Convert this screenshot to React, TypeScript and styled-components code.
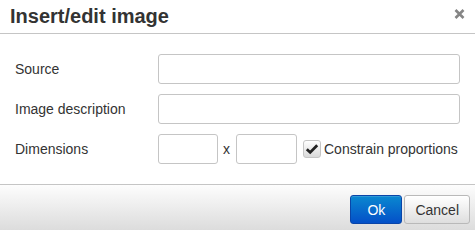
import React from "react";
import styled, { createGlobalStyle } from "styled-components";

const Global = createGlobalStyle`
  html, body { margin: 0; padding: 0; background: #fff; }
  body { font-family: "Liberation Sans", Arial, sans-serif; color: #333; }
  * { box-sizing: border-box; }
`;

const Dialog = styled.div`
  width: 475px;
  height: 230px;
  display: flex;
  flex-direction: column;
  background: #fff;
  overflow: hidden;
`;

const Head = styled.div`
  position: relative;
  height: 34px;
  padding: 0 10px;
  border-bottom: 1px solid #c5c5c5;
  flex-shrink: 0;
`;

const Title = styled.div`
  font-size: 20px;
  font-weight: bold;
  line-height: 32px;
  color: #333;
`;

const Close = styled.button`
  position: absolute;
  right: 10px;
  top: 8px;
  width: 12px;
  height: 12px;
  padding: 0;
  border: 0;
  background: none;
  display: flex;
  align-items: center;
  justify-content: center;
`;

const Body = styled.div`
  padding: 20px 15px 20px 15px;
  display: grid;
  grid-template-columns: 143px 1fr;
  row-gap: 10px;
  align-items: center;
  flex-shrink: 0;
`;

const Label = styled.label`
  font-size: 14px;
  color: #333;
  line-height: 30px;
`;

const TextBox = styled.input<{ $w?: number }>`
  height: 30px;
  width: ${(p) => (p.$w ? `${p.$w}px` : "100%")};
  border: 1px solid #c5c5c5;
  border-radius: 3px;
  background: #fff;
  padding: 0 4px;
  font: 14px "Liberation Sans", Arial, sans-serif;
  outline: none;
`;

const DimRow = styled.div`
  display: flex;
  align-items: center;
  height: 30px;
`;

const Times = styled.span`
  font-size: 14px;
  color: #333;
  margin: 0 6px 0 5px;
`;

const CheckWrap = styled.label`
  display: flex;
  align-items: center;
  margin-left: 6px;
  font-size: 14px;
  color: #333;
`;

const CheckBox = styled.span`
  width: 18px;
  height: 18px;
  border: 1px solid #c5c5c5;
  border-radius: 3px;
  background: linear-gradient(to bottom, #fff, #d9d9d9);
  display: flex;
  align-items: center;
  justify-content: center;
  margin-right: 3px;
`;

const Foot = styled.div`
  flex: 1;
  border-top: 1px solid #c5c5c5;
  background: linear-gradient(to bottom, #fdfdfd, #dcdcdc);
  display: flex;
  justify-content: flex-end;
  align-items: flex-start;
  padding: 10px 5px 0 0;
  gap: 2px;
`;

const Button = styled.button<{ $primary?: boolean }>`
  height: 29px;
  min-width: ${(p) => (p.$primary ? "52px" : "0")};
  padding: 0 10px;
  border-radius: 3px;
  font: 14px "Liberation Sans", Arial, sans-serif;
  color: ${(p) => (p.$primary ? "#fff" : "#333")};
  border: 1px solid ${(p) => (p.$primary ? "#0a45a8" : "#b9b9b9")};
  background: ${(p) =>
    p.$primary
      ? "linear-gradient(to bottom, #0a88d0, #0450c8)"
      : "linear-gradient(to bottom, #fff, #dedede)"};
  box-shadow: inset 0 1px 0 rgba(255, 255, 255, ${(p) => (p.$primary ? 0.15 : 0.6)});
`;

export default function App() {
  return (
    <Dialog>
      <Global />
      <Head>
        <Title>Insert/edit image</Title>
        <Close aria-label="Close">
          <svg width="11" height="10" viewBox="0 0 11 10">
            <path d="M1.5 1 L9.5 9 M9.5 1 L1.5 9" stroke="#858585" strokeWidth="2.6" strokeLinecap="butt" />
          </svg>
        </Close>
      </Head>
      <Body>
        <Label>Source</Label>
        <TextBox />
        <Label>Image description</Label>
        <TextBox />
        <Label>Dimensions</Label>
        <DimRow>
          <TextBox $w={60} />
          <Times>x</Times>
          <TextBox $w={61} />
          <CheckWrap>
            <CheckBox>
              <svg width="14" height="12" viewBox="0 0 14 12">
                <path d="M1.8 6.2 L5.2 9.4 L12.2 2.2" fill="none" stroke="#222" strokeWidth="2.8" />
              </svg>
            </CheckBox>
            Constrain proportions
          </CheckWrap>
        </DimRow>
      </Body>
      <Foot>
        <Button $primary>Ok</Button>
        <Button>Cancel</Button>
      </Foot>
    </Dialog>
  );
}
